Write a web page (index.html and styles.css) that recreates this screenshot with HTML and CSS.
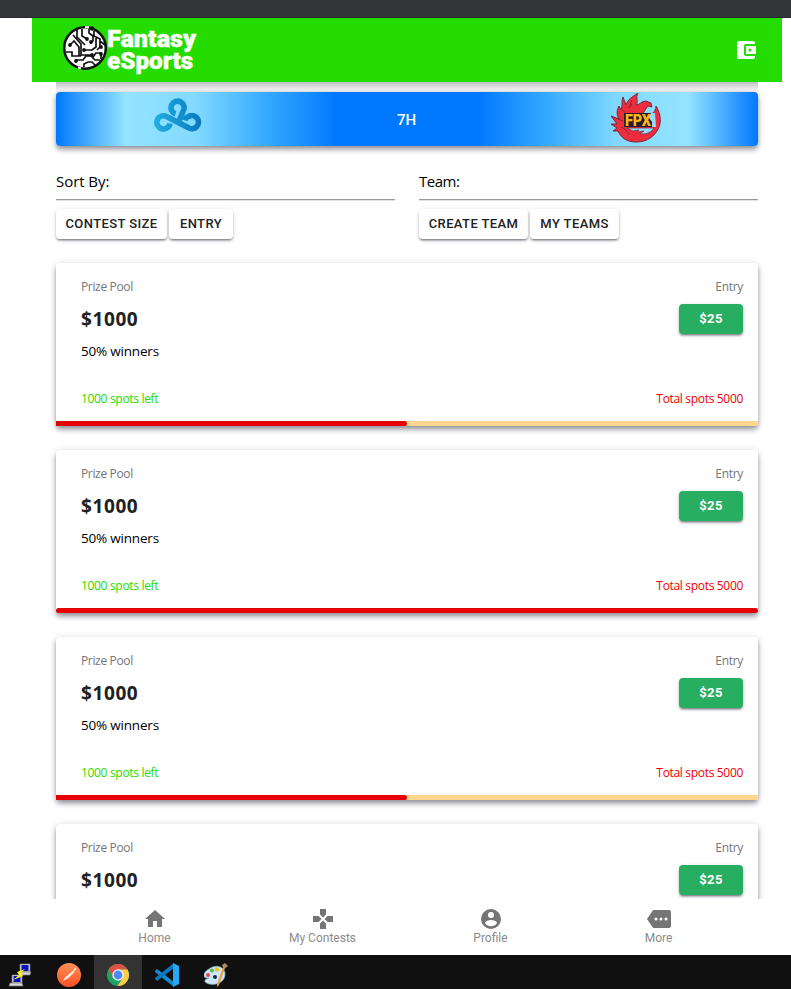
FILE: index.html
```html
<!DOCTYPE html>
<html lang="en">
<head>
<meta charset="utf-8">
<title>Fantasy eSports</title>
<link rel="stylesheet" href="styles.css">
</head>
<body>
<div class="chrome-edge"></div>
<div class="app">
  <header class="header">
    <div class="brand">
      <svg class="brand-mark" viewBox="0 0 44 46" fill="none" stroke="#111" stroke-width="1.7">
        <circle cx="22" cy="23" r="20.8" fill="#fff" stroke-width="2.5"/>
        <path d="M7 20l4-4 5 6v9M10 10l8 9v12M3 27h6v4h9M14 5v7l8 8M19 4v7l5 3M26 4v4l4 3v5l-3 2M31 6v5l6 3v8l-3 3M42 20l-5-4M33 12v10l-4 3h-8M18 30h11M38 28h-5l-3 4M38 29v5M12 35h8l3-4h5l4 4h5M21 42v-3l4-2h4l4 4"/>
        <g fill="#111" stroke="none"><circle cx="7" cy="20" r="1.9"/><circle cx="24" cy="14" r="1.9"/><circle cx="28" cy="17" r="1.9"/><circle cx="38" cy="22" r="1.9"/><circle cx="21" cy="25" r="1.9"/><circle cx="29" cy="30" r="1.9"/><circle cx="38" cy="29" r="1.9"/><circle cx="13" cy="36" r="1.9"/><circle cx="29" cy="3.5" r="2.2"/></g>
        <path d="M22 2.200h4M15 42.500l3 1" stroke="#fff" stroke-width="2"/>
      </svg>
      <div class="brand-name"><span class="fantasy">Fantasy</span><span class="esports">eSports</span></div>
    </div>
    <svg class="wallet" viewBox="0 0 24 24"><path d="M21 18v1a2 2 0 0 1-2 2H5a2 2 0 0 1-2-2V5a2 2 0 0 1 2-2h14a2 2 0 0 1 2 2v1h-9a2 2 0 0 0-2 2v8a2 2 0 0 0 2 2zm-9-2h10V8H12zm4-2.500a1.500 1.500 0 1 1 0-3 1.500 1.500 0 0 1 0 3z" fill="#fff"/></svg>
  </header>
  <main class="content">
    <div class="peek"></div>
    <section class="match">
      <svg class="cloud" viewBox="0 0 48 35" fill="none" stroke="url(#cg)" stroke-width="5.600">
        <defs><linearGradient id="cg" gradientUnits="userSpaceOnUse" x1="0" y1="20" x2="48" y2="20"><stop stop-color="#23aee5"/><stop offset="1" stop-color="#0877bd"/></linearGradient></defs>
        <path d="M16 25.500A6.600 6.600 0 1 1 12.500 18.500L34 29.500a6.600 6.600 0 1 0 .8-11.200q-3 1-4 4"/>
        <path d="M21.500 16A6.600 6.600 0 1 1 29 13.500l-3.800 9"/>
      </svg>
      <span>7H</span>
      <svg class="phoenix" viewBox="0 0 50 50">
        <path d="M27 0C24 5 28 8 25 12c4 0 5-4 10-4l5 2 1 4-4-1-3 4-2 4h8c3-1 5-4 5-8 5 8 6 18 1 25-5 8-13 11-21 11-9 0-15-4-18-11l-5 0 4-3-6-4h6l-6-8 8 3C5 21 6 17 8 13l2 4c2-5 0-8 2-13l3 8C17 6 21 4 27 0z" fill="#ef2c3c" stroke="#7c2938" stroke-width="1"/>
        <path d="M16 35h27c-4 6-9 6-14 6l4-3-7 1 2-2-6 1z" fill="#90deff" stroke="#712938" stroke-width=".7"/>
        <path d="M36 20h8l1 14h-5l-1-6z" fill="#90deff"/>
        <path d="M21 7l-3 8 3-4M11 17l3 2M7 26l5 2M10 34l4 2 4 6" fill="none" stroke="#832938"/>
        <path d="M13 20h27l-2 5 3 4v5H13z" fill="#242027"/>
        <text class="fpx" x="14" y="33" textLength="26" lengthAdjust="spacingAndGlyphs">FPX</text>
      </svg>
    </section>
    <section class="filters">
      <div class="group"><h2 class="sort">Sort By:</h2><hr><div class="actions"><button class="b-size">CONTEST SIZE</button><button class="b-entry">ENTRY</button></div></div>
      <div class="group"><h2 class="team">Team:</h2><hr><div class="actions"><button class="b-create">CREATE TEAM</button><button class="b-my">MY TEAMS</button></div></div>
    </section>
    <section class="contests">
      <article class="card"><div class="details"><div><p class="label pool">Prize Pool</p><p class="prize">$1000</p><p class="winners">50% winners</p><p class="left">1000 spots left</p></div><div class="side"><p class="label ent">Entry</p><button class="fee">$25</button><p class="total">Total spots 5000</p></div></div><div class="bar"><div class="fill half"></div></div></article>
      <article class="card"><div class="details"><div><p class="label pool">Prize Pool</p><p class="prize">$1000</p><p class="winners">50% winners</p><p class="left">1000 spots left</p></div><div class="side"><p class="label ent">Entry</p><button class="fee">$25</button><p class="total">Total spots 5000</p></div></div><div class="bar full"><div class="fill"></div></div></article>
      <article class="card"><div class="details"><div><p class="label pool">Prize Pool</p><p class="prize">$1000</p><p class="winners">50% winners</p><p class="left">1000 spots left</p></div><div class="side"><p class="label ent">Entry</p><button class="fee">$25</button><p class="total">Total spots 5000</p></div></div><div class="bar"><div class="fill half"></div></div></article>
      <article class="card"><div class="details"><div><p class="label pool">Prize Pool</p><p class="prize">$1000</p></div><div class="side"><p class="label ent">Entry</p><button class="fee">$25</button></div></div></article>
    </section>
  </main>
</div>
<nav class="bottom-nav">
  <a><svg viewBox="0 0 24 24"><path d="M10 20v-6h4v6h5v-8h3L12 3 2 12h3v8z"/></svg><span>Home</span></a>
  <a><svg viewBox="0 0 24 24"><path d="M15 7.500V2H9v5.500l3 3zM7.500 9H2v6h5.500l3-3zM9 16.500V22h6v-5.500l-3-3zM16.500 9l-3 3 3 3H22V9z"/></svg><span>My Contests</span></a>
  <a><svg viewBox="0 0 24 24"><path d="M12 2a10 10 0 1 0 0 20 10 10 0 0 0 0-20zm0 3a3 3 0 1 1 0 6 3 3 0 0 1 0-6zm0 14.200a7.200 7.200 0 0 1-6-3.220c.03-1.990 4-3.080 6-3.080s5.970 1.090 6 3.080a7.200 7.200 0 0 1-6 3.220z"/></svg><span>Profile</span></a>
  <a><svg viewBox="0 0 24 24"><path d="M22 3H7c-.69 0-1.230.350-1.590.880L0 12l5.410 8.110c.36.530.970.890 1.660.890H22a2 2 0 0 0 2-2V5a2 2 0 0 0-2-2zM9 13.500a1.500 1.500 0 1 1 0-3 1.500 1.500 0 0 1 0 3zm5 0a1.500 1.500 0 1 1 0-3 1.500 1.500 0 0 1 0 3zm5 0a1.500 1.500 0 1 1 0-3 1.500 1.500 0 0 1 0 3z"/></svg><span>More</span></a>
</nav>
<footer class="taskbar">
  <div class="task"><svg viewBox="0 0 24 24"><g stroke="#777" stroke-width=".7"><path d="M12 1h10v8H12zM4 12h10v8H4z" fill="#ddd"/><path d="M11 9h12l-1 3H11zM2 20h12l1 3H1z" fill="#d8d8ce"/></g><path d="M13.500 2h7v6h-7zM5.500 13h7v6h-7z" fill="#0812c0"/><path d="M17 6l-8 3 2 3-6 5 10-4-2-3z" fill="#ffee20"/></svg></div>
  <div class="task postman"><svg viewBox="0 0 24 24"><defs><linearGradient id="pm" x2="0" y2="1"><stop stop-color="#ff9154"/><stop offset="1" stop-color="#ff5029"/></linearGradient></defs><circle cx="12" cy="12" r="12" fill="url(#pm)"/><path d="M5 18.500l4-5 7-6 1.500 1.500-6 6zM16 7l2-2.500 1.500 1-1.500 2.500z" fill="#ffe8dc"/></svg></div>
  <div class="task active"><svg viewBox="0 0 24 24"><circle cx="12" cy="12" r="11" fill="#1da462"/><path d="M2.500 6.500A11 11 0 0 1 21.500 6.500H12l-4.800 8.300z" fill="#dd5144"/><path d="M21.500 6.500A11 11 0 0 1 11.500 23l5.300-8.200L12 6.500z" fill="#ffcd46"/><circle cx="12" cy="12" r="5.700" fill="#f1f1f1"/><circle cx="12" cy="12" r="4.400" fill="#4c8bf5"/></svg></div>
  <div class="task"><svg viewBox="0 0 24 24"><path d="M0 8l2-2 17 13v5L0 9z" fill="#168bd3"/><path d="M0 16l2 2L19 5V0L0 15z" fill="#0878be"/><path d="M18 0l6 3v18l-6 3z" fill="#29a9f2"/></svg></div>
  <div class="task"><svg viewBox="0 0 24 24"><path d="M5 6c6-5 15-3 16 4 1 8-8 13-16 11-7-2-4-5 0-6-8 1-6-6 0-9z" fill="#cce7f5" stroke="#79a9c3" stroke-width=".6"/><circle cx="4" cy="12" r="2" fill="#dd4a43"/><circle cx="8" cy="7.500" r="2" fill="#65b53f"/><circle cx="13" cy="6.500" r="2.200" fill="#efbc32"/><circle cx="11" cy="14" r="2" fill="#172a39"/><path d="M21 5l-6 17-2 2 0-3 6-17z" fill="#ec9d43"/><path d="M18 2l3-2 3 3-4 3z" fill="#b48760"/></svg></div>
</footer>
</body>
</html>
```

FILE: styles.css
```css
* { box-sizing: border-box; }
body { margin: 0; height: 989px; overflow: hidden; display: flex; flex-direction: column; background: #fff; font-family: "Open Sans", sans-serif; color: #000; }
p, h2 { margin: 0; font-weight: 400; white-space: nowrap; }
.chrome-edge { height: 18px; flex: none; background: #35363a; border-bottom: 1px solid #242528; }
.app { height: 881px; flex: none; overflow: hidden; }
.header { margin: 0 9px 0 32px; height: 64px; background: #24dc00; display: flex; align-items: center; justify-content: space-between; padding: 0 24px 0 31px; }
.brand { display: flex; align-items: center; height: 64px; }
.brand-mark { width: 44px; height: 46px; margin-top: -4px; }
.brand-name { display: flex; flex-direction: column; color: #fff; font: 900 24.5px/22px Roboto, sans-serif; }
.brand-name span { transform-origin: left; white-space: nowrap; -webkit-text-stroke: .4px #fff; }
.fantasy { transform: scaleX(1.03); }
.esports { transform: scaleX(.99); }
.wallet { width: 24px; height: 24px; }
.content { margin: 0 33px 0 56px; }
.peek { height: 10px; background: linear-gradient(#bdbdbd, #f1f1f1 70%); }
.match { height: 54px; border-radius: 4px; display: grid; grid-template-columns: 244px 1fr 244px; align-items: center; justify-items: center; color: #fff; font: 500 15px Roboto, sans-serif; box-shadow: 0 2px 4px -1px #0003, 0 4px 5px #0024, 0 1px 10px #0000001f; background: linear-gradient(90deg, #0078ff, #95e4ff 10%, #82d9ff 20%, #34aaff 30%, #0078ff 40%, #0078ff 60%, #34aaff 70%, #82d9ff 80%, #95e4ff 90%, #0078ff); }
.match span { margin: 2px 1px 0 0; }
.cloud { width: 48px; height: 35px; margin-top: -8px; }
.phoenix { width: 50px; height: 50px; margin: -3px 1px 0 0; }
.fpx { font: 900 16px Roboto, sans-serif; fill: #ffb515; }
.filters { display: grid; grid-template-columns: 1fr 1fr; gap: 24px; padding-top: 23px; }
.group h2 { font-size: 15px; line-height: 24px; }
.sort { letter-spacing: -.05px; }
.team { letter-spacing: -.5px; }
.group hr { margin: 6px 0 8px; border: 0; height: 2px; background: linear-gradient(#999 50%, #e2e2e2 50%); }
.actions { display: flex; gap: 2px; }
button { height: 30px; padding: 0 0 1px; border: 0; border-radius: 4px; background: #fff; color: #212121; font: 500 13px Roboto, sans-serif; letter-spacing: .4px; white-space: nowrap; box-shadow: 0 3px 1px -2px #0003, 0 2px 2px #0024, 0 1px 5px #0000001f; }
.b-size { width: 111px; }
.b-entry { width: 64px; }
.b-create { width: 109px; }
.b-my { width: 89px; }
.contests { display: flex; flex-direction: column; gap: 24px; padding-top: 24px; }
.card { height: 163px; border-radius: 4px; display: flex; flex-direction: column; justify-content: space-between; box-shadow: 0 2px 4px -1px #0003, 0 4px 5px #0024, 0 1px 10px #0000001f; }
.details { display: flex; justify-content: space-between; padding: 14px 15px 0 25px; }
.label { color: #757575; font-size: 12px; line-height: 20px; }
.pool { letter-spacing: -.35px; }
.ent { letter-spacing: -.3px; }
.prize { color: #212121; font-size: 19px; font-weight: 700; line-height: 30px; margin-top: 7px; letter-spacing: .6px; }
.winners { font-size: 13.5px; line-height: 20px; margin-top: 7px; letter-spacing: -.2px; }
.left, .total { font-size: 12px; line-height: 20px; letter-spacing: -.32px; }
.left { color: #24dc00; margin-top: 28px; }
.side { display: flex; flex-direction: column; align-items: flex-end; }
.fee { width: 64px; margin-top: 7px; background: #27ae60; color: #fff; font-weight: 700; }
.total { color: #f10000; margin-top: 55px; }
.bar { height: 5px; background: #ffd68e; }
.full { background: none; }
.fill { height: 5px; background: #e60000; border-radius: 3px; }
.half { width: 50%; border-radius: 0 3px 3px 0; }
.bottom-nav { flex: none; height: 56px; padding: 0 49px 0 71px; display: grid; grid-template-columns: repeat(4, 168px); background: #fff; }
.bottom-nav a { display: flex; flex-direction: column; align-items: center; padding-top: 8px; color: #8b8b8b; font: 12px/14px Roboto, sans-serif; }
.bottom-nav span { margin-right: 1px; }
.bottom-nav svg { width: 24px; height: 24px; fill: #757575; }
.taskbar { height: 34px; flex: none; background: #101010; display: flex; }
.task { width: 49px; height: 34px; display: flex; justify-content: center; padding-top: 8px; }
.task:first-child { width: 45px; padding-right: 5px; }
.postman { padding-right: 2px; }
.active { width: 48px; background: #333; }
.task svg { width: 24px; height: 24px; }
```
